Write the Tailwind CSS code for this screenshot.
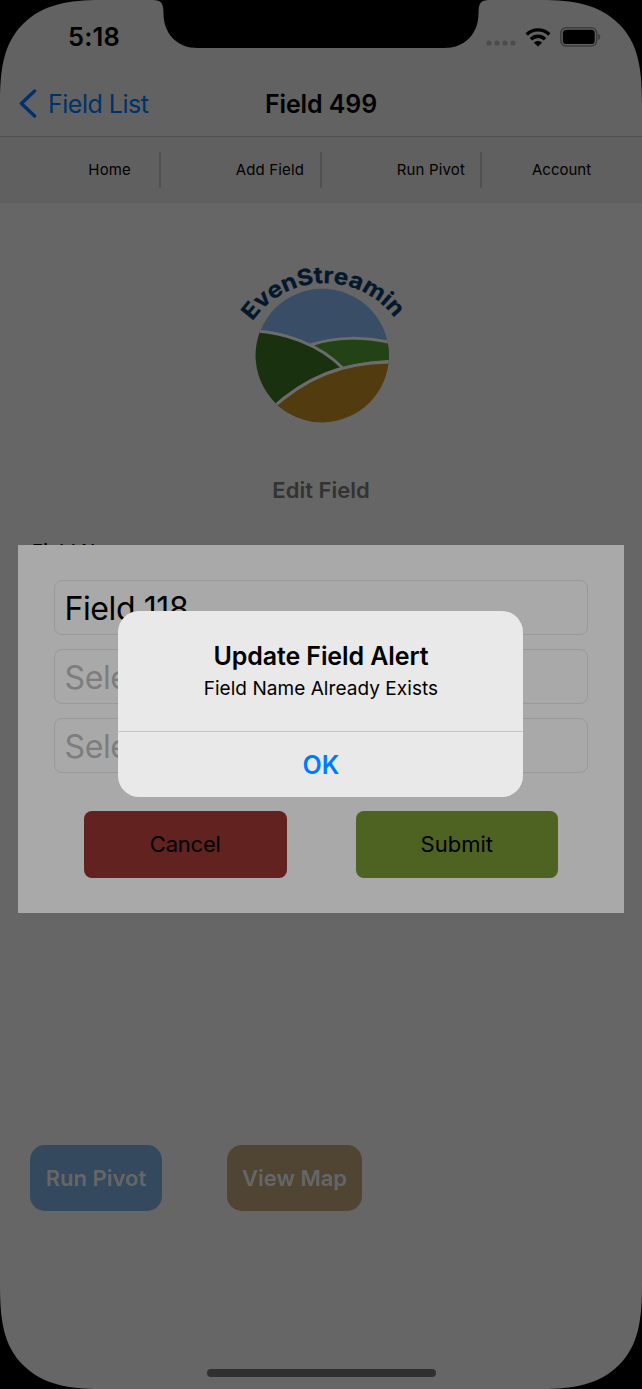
<!DOCTYPE html>
<html lang="en">
<head>
<meta charset="utf-8">
<title>Field 499</title>
<script src="https://cdn.jsdelivr.net/npm/@tailwindcss/browser@4"></script>
</head>
<body class="bg-black">
<div class="relative flex h-[1389px] w-[642px] flex-col overflow-hidden bg-[#666666] font-['Inter',sans-serif] text-black">

  <header class="flex h-[137px] flex-col border-b border-[#505050] bg-[#626262]">
    <div class="flex h-[72px] items-center pt-0.5">
      <span class="ml-[68px] text-[25.5px] leading-none font-semibold tracking-[0.2px]">5:18</span>
      <div class="mr-[41px] ml-auto flex items-center">
        <svg class="mt-3 mr-[9px] h-[6px] w-[30px] fill-[#4c4c4c]" viewBox="0 0 30 6"><circle cx="3" cy="3" r="2.6"/><circle cx="11" cy="3" r="2.6"/><circle cx="19" cy="3" r="2.6"/><circle cx="27" cy="3" r="2.6"/></svg>
        <svg class="mr-[9px] h-[19px] w-[26px]" viewBox="0 0 26 19"><g fill="none" stroke="#000" stroke-width="3.4"><path d="M1.700 6.400C8 .4 18 .4 24.300 6.400"/><path d="M5.900 11.300C10 7.300 16 7.300 20.100 11.300"/></g><path d="M13 18.600L8.900 14.700C11.200 12.500 14.800 12.500 17.100 14.700Z"/></svg>
        <svg class="mb-px h-[20px] w-[41px]" viewBox="0 0 41 20"><rect x=".8" y=".8" width="35.9" height="18.2" rx="5.400" fill="none" stroke="#3c3c3c" stroke-width="1.500"/><rect x="2.800" y="2.800" width="31.900" height="14.200" rx="3.600"/><path d="M38.300 6.800C40.900 7.800 40.900 12 38.300 13Z" fill="#3c3c3c"/></svg>
      </div>
    </div>
    <div class="grid h-[64px] grid-cols-3 items-center">
      <a class="flex items-center pl-[19px] text-[25px] leading-none tracking-[-0.5px] whitespace-nowrap text-[#003169]">
        <svg class="mr-[11px] mb-[2px] h-[29px] w-[18px]" viewBox="0 0 18 29" fill="none" stroke="#003169" stroke-width="3.400" stroke-linecap="round" stroke-linejoin="round"><path d="M15.600 2L2.400 14.500L15.600 27"/></svg>Field List</a>
      <h1 class="text-center text-[25px] leading-none font-semibold tracking-[-0.1px]">Field 499</h1>
    </div>
  </header>

  <nav class="flex h-[66px] items-center bg-[#606060] text-[15px] leading-none tracking-[0.15px]">
    <div class="flex h-9 w-[161px] items-center justify-end border-r-2 border-[#515151] pr-[28px] pb-0.5">Home</div>
    <div class="flex h-9 w-[161px] items-center justify-end border-r-2 border-[#515151] pr-[16px] pb-0.5">Add Field</div>
    <div class="flex h-9 w-[160px] items-center justify-end border-r-2 border-[#515151] pr-[15px] pb-0.5">Run Pivot</div>
    <div class="flex h-9 w-[160px] items-center pb-0.5 pl-[50px] tracking-normal">Account</div>
  </nav>

  <main class="flex flex-1 flex-col">
    <svg class="mt-[47px] ml-[220px] h-[190px] w-[200px]" viewBox="220 250 200 190">
      <defs>
        <clipPath id="disc"><circle cx="322.300" cy="355.500" r="66.700"/></clipPath>
        <path id="arc" d="M252.500 321.500A87.200 87.200 0 0 1 397 321.500"/>
      </defs>
      <g clip-path="url(#disc)">
        <path fill="#394e66" d="M250 280H400V360H250Z"/>
        <path fill="#234216" stroke="#6c6c6c" stroke-width="3" d="M312 344.500C335 337 365 336 395 343.500V361.500C376 361.500 358 364 330 372Z"/>
        <path fill="#1a310f" stroke="#6c6c6c" stroke-width="3" d="M240 331C283 329 322 346 343.500 369L320 440H240Z"/>
        <path fill="#523c0f" stroke="#6c6c6c" stroke-width="3" d="M270 410C305 378 340 362 396 362V440H270Z"/>
      </g>
      <text font-family="Inter" font-weight="700" font-size="22.500" fill="#04172b" stroke="#04172b" stroke-width=".3"><textPath href="#arc" textLength="166" lengthAdjust="spacingAndGlyphs">EvenStreamin</textPath></text>
    </svg>
    <h2 class="mt-[38px] text-center text-[22px] leading-[24px] font-semibold text-[#333333]">Edit Field</h2>
    <p class="mt-[36.500px] ml-[32px] text-[18.500px] leading-[24px] font-medium tracking-[0.3px]">Field Name</p>
    <div class="mt-auto mb-[158.500px] ml-[30px] flex items-center gap-[65px] text-[22px] leading-none font-semibold text-[#666666]">
      <button class="h-[66px] w-[132px] rounded-[15px] bg-[#34495d] whitespace-nowrap">Run Pivot</button>
      <button class="h-[66px] w-[135px] rounded-[15px] bg-[#504433] whitespace-nowrap">View Map</button>
    </div>
    <div class="mb-[12px] ml-[206.500px] h-[8px] w-[229.500px] rounded-full bg-[#303030]"></div>
  </main>

  <section class="absolute top-[544.500px] left-[18px] flex h-[368.500px] w-[606px] flex-col bg-[#a9a9a9] px-[36px] pt-[35.500px]">
    <div class="flex flex-col gap-[14px] text-[32px] leading-none tracking-[-0.400px] text-[#7d7d7f]">
      <div class="flex h-[55px] items-center rounded-[8px] border border-[#999999] pt-0.5 pl-[9.500px] text-black">Field 118</div>
      <div class="flex h-[55px] items-center rounded-[8px] border border-[#999999] pt-0.5 pl-[9.500px]">Select</div>
      <div class="flex h-[55px] items-center rounded-[8px] border border-[#999999] pt-0.5 pl-[9.500px]">Select</div>
    </div>
    <div class="mt-[38px] flex justify-between px-[30px] text-[22px] leading-none tracking-[-0.200px]">
      <button class="h-[66.500px] w-[202.500px] rounded-[8px] bg-[#612220] pb-[0.5px]">Cancel</button>
      <button class="h-[66.500px] w-[202.500px] rounded-[8px] bg-[#4e6222] pb-[0.5px] tracking-normal">Submit</button>
    </div>
  </section>

  <div class="absolute top-[611px] left-[118.400px] flex h-[186px] w-[405px] flex-col overflow-hidden rounded-[21px] bg-[#e9e9e9] text-center" role="alertdialog">
    <div class="flex h-[120px] flex-col items-center pt-[30px]">
      <h3 class="text-[25px] leading-[30px] font-semibold tracking-[-0.100px] whitespace-nowrap">Update Field Alert</h3>
      <p class="mt-[6px] text-[19px] leading-[24px] tracking-[0.050px] whitespace-nowrap">Field Name Already Exists</p>
    </div>
    <button class="flex-1 border-t border-[#c6c6c6] pt-px text-[25px] leading-none font-semibold text-[#007aff]">OK</button>
  </div>

  <svg class="absolute inset-0 h-[1389px] w-[642px]" viewBox="0 0 642 1389">
    <path d="M0 0H100C70 0 43 4 23 24C3 44 0 70 0 105Z"/>
    <path d="M642 0H542C572 0 599 4 619 24C639 44 642 70 642 105Z"/>
    <path d="M0 1389H100C70 1389 43 1385 23 1365C3 1345 0 1319 0 1284Z"/>
    <path d="M642 1389H542C572 1389 599 1385 619 1365C639 1345 642 1319 642 1284Z"/>
    <path d="M153 0C161 0 163.500 3 163.500 13C163.500 35 178 48 198 48H444C464 48 478.500 35 478.500 13C478.500 3 481 0 489 0Z"/>
  </svg>
</div>
</body>
</html>
